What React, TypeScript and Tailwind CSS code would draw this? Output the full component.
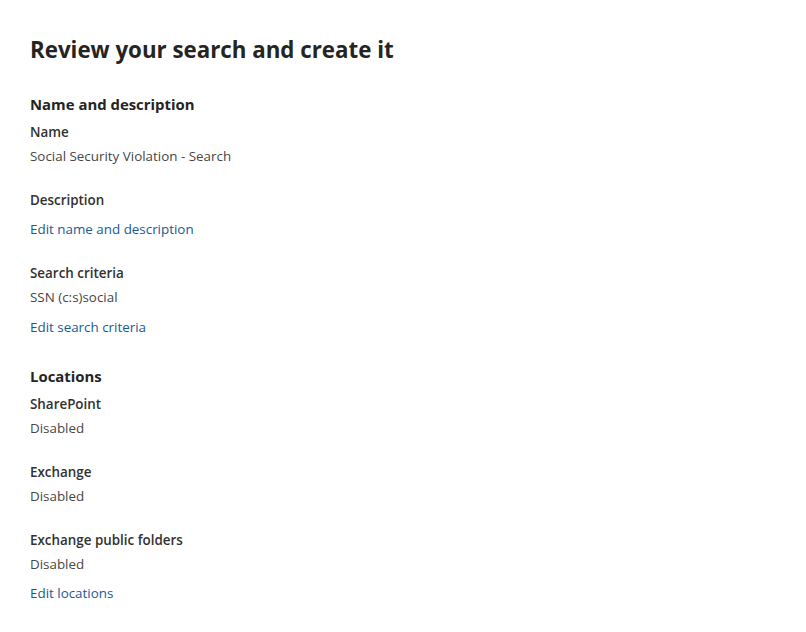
const font = { fontFamily: '"Segoe UI", "Open Sans", "Liberation Sans", sans-serif' };

type Field = { label: string; value?: string };

const Label = ({ children, className = "" }: { children: React.ReactNode; className?: string }) => (
  <div className={`text-[13.4px] leading-[20px] font-semibold text-[#323130] ${className}`}>{children}</div>
);

const Value = ({ children }: { children: React.ReactNode }) => (
  <div className="mt-1 text-[13.4px] leading-[20px] text-[#484644]">{children}</div>
);

const EditLink = ({ children, className = "" }: { children: React.ReactNode; className?: string }) => (
  <a href="#" className={`block w-fit text-[13.4px] leading-[20px] text-[#195a94] ${className}`}>
    {children}
  </a>
);

const SectionTitle = ({ children, className = "" }: { children: React.ReactNode; className?: string }) => (
  <h2 className={`text-[14.9px] leading-[22px] font-bold text-[#252423] ${className}`}>{children}</h2>
);

const locations: Field[] = [
  { label: "SharePoint", value: "Disabled" },
  { label: "Exchange", value: "Disabled" },
  { label: "Exchange public folders", value: "Disabled" },
];

export default function App() {
  return (
    <div className="min-h-screen bg-white px-[30px] pt-[34px] pb-10" style={font}>
      <h1 className="text-[22.3px] leading-[32px] font-bold text-[#252423]">Review your search and create it</h1>

      <SectionTitle className="mt-[27px]">Name and description</SectionTitle>
      <Label className="mt-[7px]">Name</Label>
      <Value>Social Security Violation - Search</Value>

      <Label className="mt-6">Description</Label>
      <EditLink className="mt-[9px]">Edit name and description</EditLink>

      <Label className="mt-6">Search criteria</Label>
      <Value>SSN (c:s)social</Value>
      <EditLink className="mt-[10px]">Edit search criteria</EditLink>

      <SectionTitle className="mt-[28px]">Locations</SectionTitle>
      {locations.map((loc, i) => (
        <div key={loc.label} className={i === 0 ? "mt-[7px]" : "mt-6"}>
          <Label>{loc.label}</Label>
          <Value>{loc.value}</Value>
        </div>
      ))}
      <EditLink className="mt-[9px]">Edit locations</EditLink>
    </div>
  );
}
